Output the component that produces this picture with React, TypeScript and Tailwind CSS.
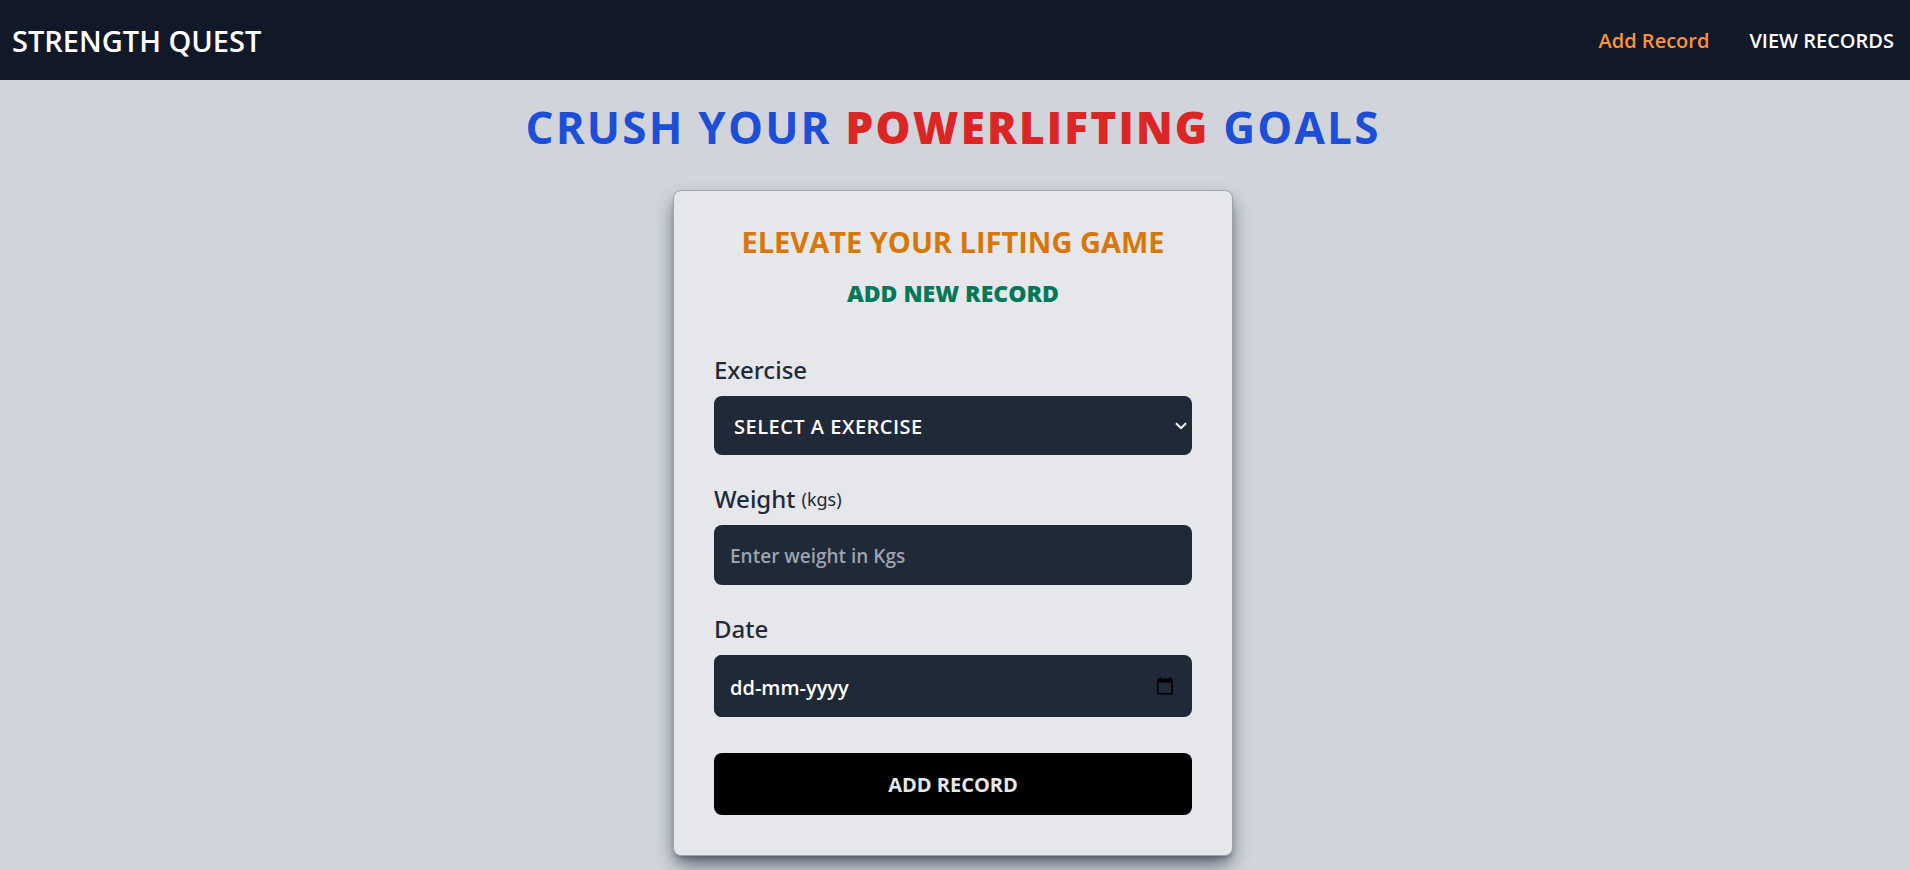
import { useState } from "react";
import type { ReactNode } from "react";

const control = "block w-full rounded-lg bg-[#1f2937] font-semibold text-white outline-none";

function Field({ id, label, children }: { id: string; label: ReactNode; children: ReactNode }) {
  return (
    <div>
      <label
        htmlFor={id}
        className="mb-2 flex items-center gap-1.5 font-['Noto_Sans','Open_Sans',sans-serif] text-2xl leading-9 font-medium text-[#1f2937]"
      >
        {label}
      </label>
      {children}
    </div>
  );
}

export default function App() {
  const [date, setDate] = useState("");

  return (
    <div className="min-h-screen overflow-hidden bg-[#d1d5db] pb-4 font-['Open_Sans',sans-serif]">
      <header className="flex h-20 items-center justify-between bg-[#111827] pt-0.5 pr-4 pl-3 text-white">
        <a href="#home" className="text-[29px] leading-10 font-semibold">
          STRENGTH QUEST
        </a>
        <nav className="flex gap-10 text-xl font-semibold">
          <a href="#add" className="text-[#fb923c]">
            Add Record
          </a>
          <a href="#records">VIEW RECORDS</a>
        </nav>
      </header>
      <main className="flex flex-col items-center pr-1">
        <h1 className="mt-5 text-[44px] leading-[54px] font-bold tracking-wider text-[#1d4ed8]">
          CRUSH YOUR <span className="font-extrabold text-[#dc2626]">POWERLIFTING</span> GOALS
        </h1>
        <section className="mt-9 w-full max-w-[560px] rounded-lg border border-[#9ca3af] bg-[#e5e7eb] px-10 pt-8 pb-10 shadow-[0_10px_20px_-3px_#4b5563,0_4px_6px_-4px_#4b5563]">
          <h2 className="text-center text-[29px] leading-[38px] font-bold text-[#d97706]">
            ELEVATE YOUR LIFTING GAME
          </h2>
          <h3 className="mt-4 text-center text-[23px] leading-8 font-extrabold text-[#047857]">
            ADD NEW RECORD
          </h3>
          <form className="mt-[43px] flex flex-col gap-[26px]">
            <Field id="exercise" label="Exercise">
              <div className="relative">
                <select
                  id="exercise"
                  className={`${control} h-[59px] appearance-none px-5 pt-0.5 text-xl tracking-wide`}
                >
                  <option>SELECT A EXERCISE</option>
                </select>
                <svg
                  viewBox="0 0 12 8"
                  className="pointer-events-none absolute top-[26px] right-[5px] h-2 w-3"
                  fill="none"
                  stroke="white"
                  strokeWidth="2"
                  aria-hidden="true"
                >
                  <path d="M1 1.2 6 6.2 11 1.2" />
                </svg>
              </div>
            </Field>
            <Field
              id="weight"
              label={
                <>
                  Weight <span className="text-lg leading-6 font-normal">(kgs)</span>
                </>
              }
            >
              <input
                id="weight"
                type="number"
                placeholder="Enter weight in Kgs"
                className={`${control} h-[60px] px-4 pt-0.5 text-[19px] placeholder:text-[#9ca3af]`}
              />
            </Field>
            <Field id="date" label="Date">
              <div className="flex h-[62px] items-center rounded-lg bg-[#1f2937] pr-[18px]">
                <input
                  id="date"
                  type="text"
                  inputMode="numeric"
                  placeholder="dd-mm-yyyy"
                  value={date}
                  onChange={(event) => setDate(event.target.value)}
                  className={`${control} h-full min-w-0 flex-1 px-4 pt-0.5 text-xl placeholder:text-white`}
                />
                <button type="button" aria-label="Open calendar">
                  <svg viewBox="0 0 18 20" className="h-5 w-[18px]" aria-hidden="true">
                    <path
                      fill="black"
                      fillRule="evenodd"
                      d="M3.5 1H5v1.6h8V1h1.5v1.6h1A1.5 1.5 0 0 1 17 4.100V17a1.500 1.500 0 0 1-1.500 1.500h-13A1.500 1.500 0 0 1 1 17V4.100a1.500 1.500 0 0 1 1.500-1.500h1zM2.500 6.500V17h13V6.500z"
                    />
                  </svg>
                </button>
              </div>
            </Field>
            <button
              type="button"
              className="mt-2.5 h-[62px] w-full rounded-lg bg-black pt-0.5 text-xl font-bold text-[#e5e7eb]"
            >
              ADD RECORD
            </button>
          </form>
        </section>
      </main>
    </div>
  );
}
